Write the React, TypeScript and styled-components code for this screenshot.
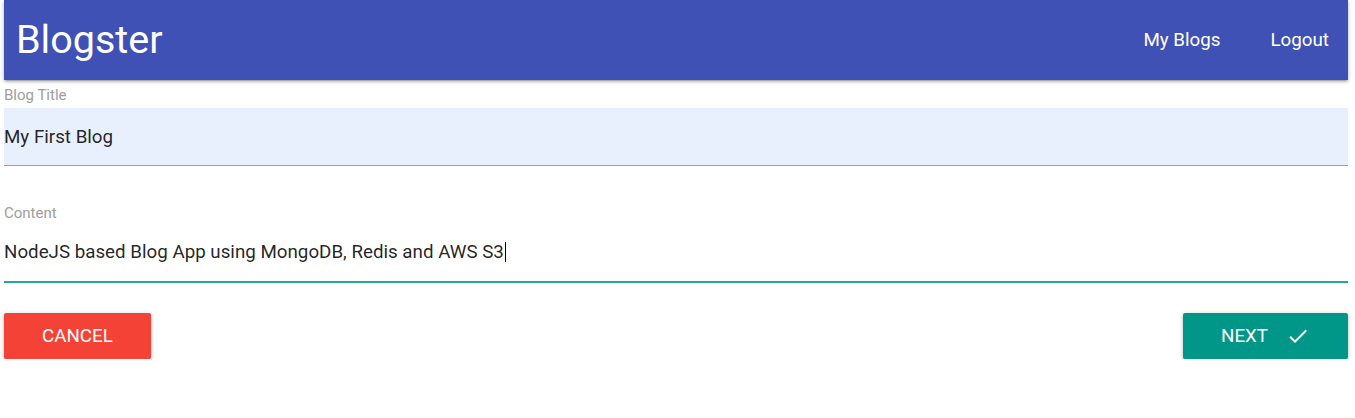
import React from "react";
import styled, { createGlobalStyle } from "styled-components";

const Global = createGlobalStyle`
  html, body { margin: 0; padding: 0; background: #fff; }
  body { font-family: Roboto, "Noto Sans", Arial, sans-serif; color: rgba(0,0,0,0.87); }
  * { box-sizing: border-box; }
`;

const Page = styled.div`
  padding: 0 7px 0 4px;
`;

const Nav = styled.nav`
  height: 80px;
  background: #3f51b5;
  color: #fff;
  display: flex;
  align-items: center;
  justify-content: space-between;
  box-shadow: 0 2px 2px 0 rgba(0,0,0,.14), 0 3px 1px -2px rgba(0,0,0,.12), 0 1px 5px 0 rgba(0,0,0,.2);
  position: relative;
  z-index: 1;
`;

const Logo = styled.a`
  font-size: 39.5px;
  padding-left: 12px;
  line-height: 80px;
  color: #fff;
  text-decoration: none;
`;

const NavLinks = styled.ul`
  list-style: none;
  margin: 0;
  padding: 0 1px 0 0;
  display: flex;
  gap: 14px;
`;

const NavLink = styled.a`
  display: block;
  padding: 0 18px;
  font-size: 18.75px;
  line-height: 80px;
  color: #fff;
  text-decoration: none;
`;

const Form = styled.form`
  display: flex;
  flex-direction: column;
`;

const Field = styled.div<{ $top: number }>`
  margin-top: ${(p) => p.$top}px;
  display: flex;
  flex-direction: column;
`;

const Label = styled.label<{ $gap: number }>`
  font-size: 15px;
  line-height: 18px;
  color: #9e9e9e;
  margin-bottom: ${(p) => p.$gap}px;
`;

const InputBox = styled.div<{ $filled?: boolean; $focused?: boolean }>`
  height: ${(p) => (p.$focused ? 59 : 58)}px;
  display: flex;
  align-items: center;
  font-size: 18.75px;
  color: rgba(0,0,0,0.87);
  background: ${(p) => (p.$filled ? "#e8f0fe" : "transparent")};
  border-bottom: ${(p) => (p.$focused ? "2px solid #26a69a" : "1px solid #9e9e9e")};
  padding-bottom: ${(p) => (p.$focused ? 1 : 0)}px;
`;

const Caret = styled.span`
  display: inline-block;
  width: 1px;
  height: 20px;
  background: #000;
  margin-left: 1px;
  vertical-align: middle;
`;

const Actions = styled.div`
  margin-top: 30px;
  display: flex;
  justify-content: space-between;
`;

const Button = styled.button<{ $color: string }>`
  height: 46px;
  padding: 0 38px;
  border: none;
  border-radius: 2px;
  background: ${(p) => p.$color};
  color: #fff;
  font-family: Roboto, "Noto Sans", Arial, sans-serif;
  font-size: 18.75px;
  text-transform: uppercase;
  display: flex;
  align-items: center;
  gap: 18px;
  box-shadow: 0 2px 2px 0 rgba(0,0,0,.14), 0 3px 1px -2px rgba(0,0,0,.12), 0 1px 5px 0 rgba(0,0,0,.2);
  cursor: pointer;
`;

const CheckIcon = () => (
  <svg width="24" height="24" viewBox="0 0 24 24" fill="#fff" aria-hidden="true">
    <path d="M9 16.17L4.83 12l-1.42 1.41L9 19 21 7l-1.41-1.41z" />
  </svg>
);

export default function App() {
  return (
    <>
      <Global />
      <Page>
        <Nav>
          <Logo href="#">Blogster</Logo>
          <NavLinks>
            <li><NavLink href="#">My Blogs</NavLink></li>
            <li><NavLink href="#">Logout</NavLink></li>
          </NavLinks>
        </Nav>
        <Form>
          <Field $top={6}>
            <Label $gap={4}>Blog Title</Label>
            <InputBox $filled>My First Blog</InputBox>
          </Field>
          <Field $top={38}>
            <Label $gap={2}>Content</Label>
            <InputBox $focused>
              NodeJS based Blog App using MongoDB, Redis and AWS S3<Caret />
            </InputBox>
          </Field>
          <Actions>
            <Button type="button" $color="#f44336">Cancel</Button>
            <Button type="button" $color="#009688">
              Next
              <CheckIcon />
            </Button>
          </Actions>
        </Form>
      </Page>
    </>
  );
}
